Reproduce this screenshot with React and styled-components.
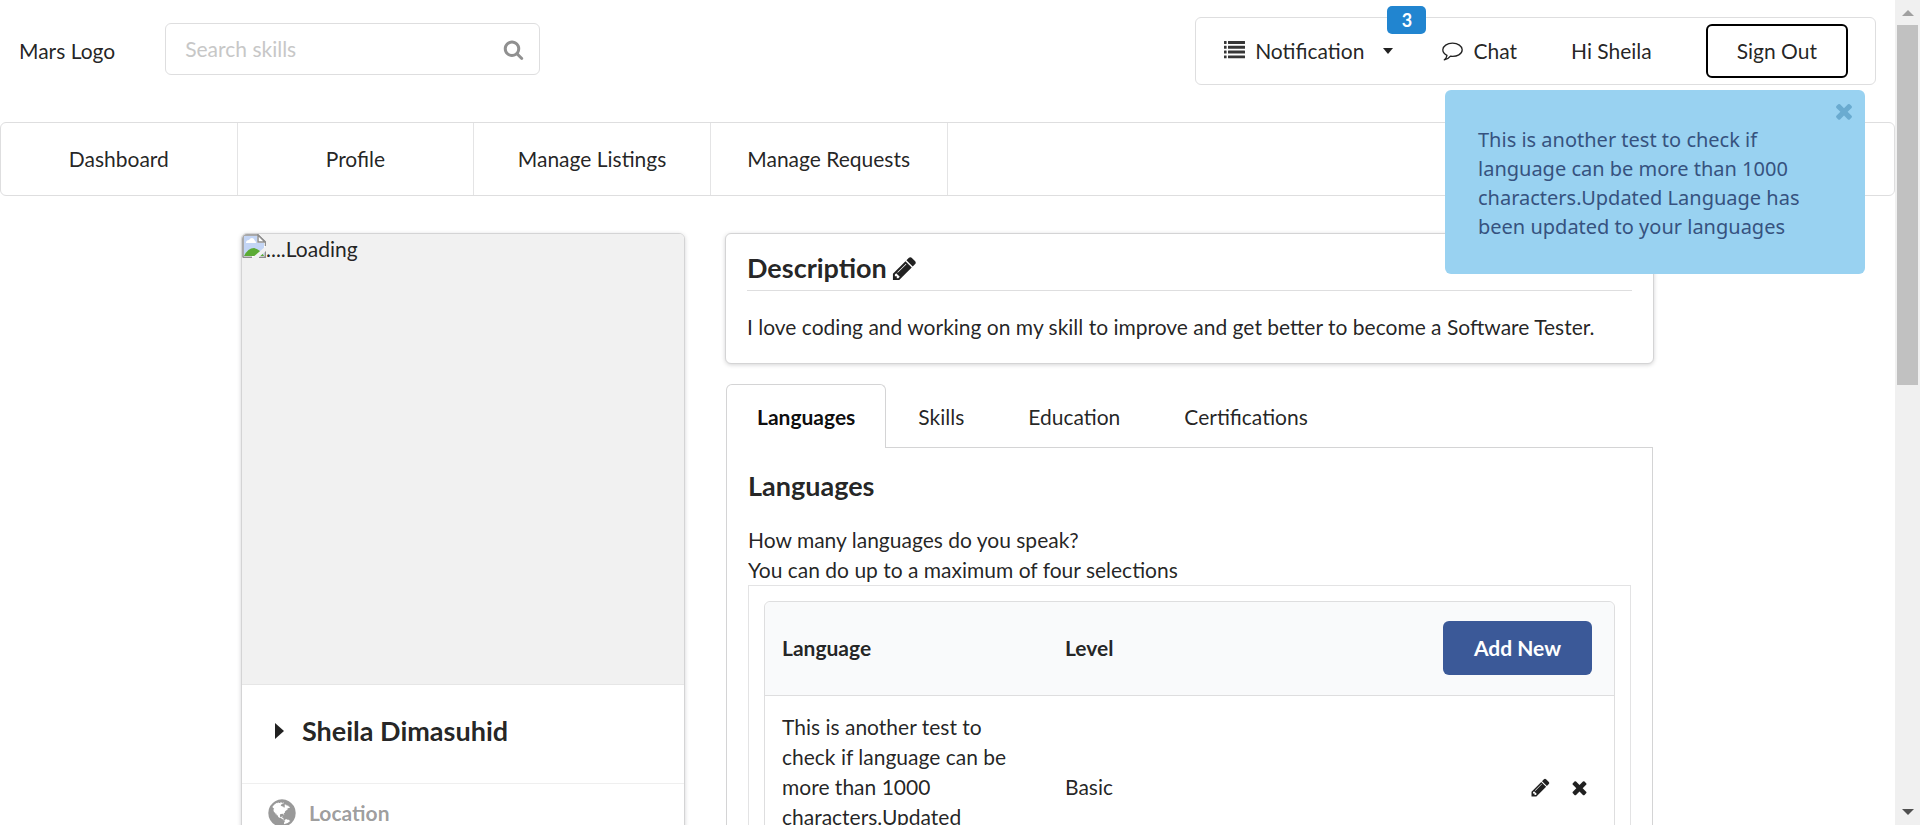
import React from 'react';
import styled, { createGlobalStyle } from 'styled-components';

const ink = 'rgba(0, 0, 0, 0.87)';
const line = '#dededf';
const strongLine = '#d4d4d5';

const GlobalStyle = createGlobalStyle`
  *, *::before, *::after { box-sizing: border-box; }
  body {
    margin: 0;
    background: #fff;
    color: ${ink};
    font: 21px/30px Lato, "Liberation Sans", sans-serif;
  }
  h2, h3, p { margin: 0; }
  button, input { font: inherit; color: inherit; }
  button { cursor: pointer; }
  a { color: inherit; text-decoration: none; }
`;

/* ---------- icons ---------- */

const Svg = styled.svg`
  display: block;
  flex: none;
  fill: currentColor;
`;

const paths = {
  search:
    'M1216 832q0-185-131.5-316.5t-316.5-131.5-316.5 131.5-131.5 316.5 131.5 316.5 316.5 131.5 316.5-131.5 131.5-316.5zm512 832q0 52-38 90t-90 38q-54 0-90-38l-343-342q-179 124-399 124-143 0-273.5-55.5t-225-150-150-225-55.5-273.5 55.5-273.5 150-225 225-150 273.5-55.5 273.5 55.5 225 150 150 225 55.5 273.5q0 220-124 399l343 343q37 37 37 90z',
  pencil:
    'M491 1536l91-91-235-235-91 91v107h128v128h107zm523-928q0-22-22-22-10 0-17 7l-542 542q-7 7-7 17 0 22 22 22 10 0 17-7l542-542q7-7 7-17zm-54-192l416 416-832 832h-416v-416zm683 96q0 53-37 90l-166 166-416-416 166-165q36-38 90-38 53 0 91 38l235 234q37 39 37 91z',
  close:
    'M1490 1322q0 40-28 68l-136 136q-28 28-68 28t-68-28l-294-294-294 294q-28 28-68 28t-68-28l-136-136q-28-28-28-68t28-68l294-294-294-294q-28-28-28-68t28-68l136-136q28-28 68-28t68 28l294 294 294-294q28-28 68-28t68 28l136 136q28 28 28 68t-28 68l-294 294 294 294q28 28 28 68z',
  globe:
    'M896 128q209 0 385.5 103t279.5 279.5 103 385.5-103 385.5-279.5 279.5-385.5 103-385.5-103-279.5-279.5-103-385.5 103-385.5 279.5-279.5 385.5-103zm274 521q-2 1-9.5 9.5t-13.5 9.5q2 0 4.5-5t5-11 3.5-7q6-7 22-15 14-6 52-12 34-8 51 11-2-2 9.5-13t14.5-12q3-2 15-4.5t15-7.5l2-22q-12 1-17.5-7t-6.5-21q0 2-6 8 0-7-4.5-8t-11.5 1-9 1q-10-3-15-7.5t-8-16.5-4-15q-2-5-9.5-11t-9.5-10q-1-2-2.5-5.5t-3-6.5-4-5.5-5.5-2.5-7 5-7.5 10-4.5 5q-3-2-6-1.5t-4.5 1-4.5 3-5 3.5q-3 2-8.5 3t-8.5 2q15-5-1-11-10-4-16-3 9-4 7.5-12t-8.5-14h5q-1-4-8.5-8.5t-17.5-8.5-13-6q-8-5-34-9.5t-33-.5q-5 6-4.5 10.5t4 14 3.5 12.5q1 6-5.5 13t-6.5 12q0 7 14 15.5t10 21.5q-3 8-16 16t-16 12q-5 8-1.5 18.5t10.5 16.5q2 2 1.5 4t-3.5 4.5-5.5 4-6.5 3.5l-3 2q-11 5-20.5-6t-13.5-26q-7-25-16-30-23-8-29 1-5-13-41-26-25-9-58-4 6-1 0-15-7-15-19-12 3-6 4-17.5t1-13.5q3-13 12-23 1-1 7-8.5t9.5-13.5.5-6q35 4 50-11 5-5 11.5-17t10.5-17q9-6 14-5.5t14.5 5.5 14.5 5q14 1 15.5-11t-7.5-20q12 1 3-17-4-7-8-9-12-4-27 5-8 4 2 8-1-1-9.5 10.5t-16.5 17.5-16-5q-1-1-5.5-13.5t-9.5-13.5q-8 0-16 15 3-8-11-15t-24-8q19-12-8-27-7-4-20.5-5t-19.5 4q-5 7-5.5 11.5t5 8 10.5 5.5 11.5 4 8.5 3q14 10 8 14-2 1-8.5 3.5t-11.5 4.5-6 4q-3 4 0 14t-2 14q-5-5-9-17.5t-7-16.5q7 9-25 6l-10-1q-4 0-16 2t-20.5 1-13.5-8q-4-8 0-20 1-4 4-2-4-3-11-9.5t-10-8.5q-46 15-94 41 6 1 12-1 5-2 13-6.5t10-5.5q34-14 42-7l5-5q14 16 20 25-7-4-30-1-20 6-22 12 7 12 5 18-4-3-11.5-10t-14.5-11-15-5q-16 0-22 1-146 80-235 222 7 7 12 8 4 1 5 9t2.5 11 11.5-3q9 8 3 19 1-1 44 27 19 17 21 21 3 11-10 18-1-2-9-9t-9-4q-3 5 .5 18.5t10.5 12.5q-7 0-9.5 16t-2.5 35.5-1 23.5l2 1q-3 12 5.5 34.5t21.5 19.5q-13 3 20 43 6 8 8 9 3 2 12 7.5t15 10 10 10.5q4 5 10 22.5t14 23.5q-2 6 9.5 20t10.5 23q-1 0-2.5 1t-2.5 1q3 7 15.5 14t15.5 13q1 3 2 10t3 11 8 2q2-20-24-62-15-25-17-29-3-5-5.5-15.5t-4.5-14.5q2 0 6 1.5t8.5 3.5 7.5 4 2 3q-3 7 2 17.5t12 18.5 17 19 12 13q6 6 14 19.5t0 13.5q9 0 20 10.5t17 19.5q5 8 8 26t5 24q2 7 8.5 13.5t12.5 9.5l16 8 13 7q5 2 18.5 10.5t21.5 11.5q10 4 16 4t14.5-2.5 13.5-3.5q15-2 29 15t21 21q36 19 55 11-2 1 .5 7.5t8 15.5 9 14.5 5.5 8.5q5 6 18 15t18 15q6-4 7-9-3 8 7 20t18 10q14-3 14-32-31 15-49-18 0-1-2.5-5.5t-4-8.5-2.5-8.5 0-7.5 5-3q9 0 10-3.5t-2-12.5-4-13q-1-8-11-20t-12-15q-5 9-16 8t-16-9q0 1-1.5 5.5t-1.5 6.5q-13 0-15-1 1-3 2.5-17.5t3.5-22.5q1-4 5.5-12t7.5-14.5 4-12.5-4.5-9.5-17.5-2.5q-19 1-26 20-1 3-3 10.5t-5 11.5-9 7q-7 3-24 2t-24-5q-13-8-22.5-29t-9.5-37q0-10 2.5-26.5t3-25-5.5-24.5q3-2 9-9.5t10-10.5q2-1 4.5-1.5t4.5 0 4-1.5 3-6q-1-1-4-3-3-3-4-3 7 3 28.5-1.5t27.5 1.5q15 11 22-2 0-1-2.5-9.5t-.5-13.5q5 27 29 9 3 3 15.5 5t17.5 5q3 2 7 5.5t5.5 4.5 5-.5 8.5-6.5q10 14 12 24 11 40 19 44 7 3 11 2t4.5-9.5 0-14-1.5-12.5l-1-8v-18l-1-8q-15-3-18.5-12t1.5-18.5 15-18.5q1-1 8-3.5t15.5-6.5 12.5-8q21-19 15-35 7 0 11-9-1 0-5-3t-7.5-5-4.5-2q9-5 2-16 5-3 7.5-11t7.5-10q9 12 21 2 7-8 1-16 5-7 20.5-10.5t18.5-9.5q7 2 8-2t1-12 3-12q4-5 15-9t13-5l17-11q3-4 0-4 18 2 31-11 10-11-6-20 3-6-3-9.5t-15-5.5q3-1 11.5-.5t10.5-1.5q15-10-7-16-17-5-43 12zm-163 877q206-36 351-189-3-3-12.5-4.5t-12.5-3.5q-18-7-24-8 1-7-2.5-13t-8-9-12.5-8-11-7q-2-2-7-6t-7-5.5-7.5-4.5-8.5-2-10 1l-3 1q-3 1-5.5 2.5t-5.5 3-4 3 0 2.5q-21-17-36-22-5-1-11-5.5t-10.5-7-10-1.5-11.5 7q-5 5-6 15t-2 13q-7-5 0-17.5t2-18.5q-3-6-10.5-4.5t-12 4.5-11.5 8.5-9 6.5-8.5 5.5-8.5 7.5q-3 4-6 12t-5 11q-2-4-11.5-6.5t-9.5-5.5q2 10 4 35t5 38q7 31-12 48-27 25-29 40-4 22 12 26 0 7-8 20.5t-7 21.5q0 6 2 16z',
};

const Icon = ({ name, size = 21 }) => (
  <Svg viewBox="0 0 1792 1792" width={size} height={size} aria-hidden="true">
    <path d={paths[name]} />
  </Svg>
);

const ListIcon = () => (
  <Svg viewBox="0 0 21 20" width="21" height="20" opacity="0.9" aria-hidden="true">
    {[0, 4.8, 9.6, 14.4].map((y) => (
      <g key={y}>
        <rect x="0" y={y} width="2.6" height="2.9" rx="0.3" />
        <rect x="4" y={y} width="17" height="2.9" rx="0.3" />
      </g>
    ))}
  </Svg>
);

const ChatIcon = () => (
  <Svg viewBox="0 0 21 19" width="21" height="19" aria-hidden="true">
    <path
      d="M10.500 1.200C5.200 1.200 .8 4.100 .8 7.800C.8 10.200 2.500 12.200 5 13.300C4.700 15 3.800 16.600 2.300 17.800C5 17.400 7 16.200 8.500 14.200C15.200 15 20.200 12 20.200 7.800C20.200 4.100 15.900 1.200 10.500 1.200Z"
      fill="none"
      stroke="currentColor"
      strokeWidth="1.300"
      strokeLinejoin="round"
    />
  </Svg>
);

const Triangle = ({ points, width, height }) => (
  <Svg viewBox={`0 0 ${width} ${height}`} width={width} height={height} aria-hidden="true">
    <polygon points={points} />
  </Svg>
);

const BrokenImage = () => (
  <Svg viewBox="0 0 24 24" width="24" height="24" aria-hidden="true">
    <path d="M1 1H16L23 8V23H1Z" fill="#fff" />
    <path d="M2 2H15V9H22V22H2Z" fill="#c3d5f5" />
    <path d="M4 9q0-3 3-3q1-2 3-2q2 0 3 3q1 0 1 2z" fill="#fff" />
    <path d="M2 22q4-8 10-8q7 2 10 8z" fill="#5bab35" />
    <path d="M1 23.500V1H16L23.500 8V12" fill="none" stroke="#8e8e8e" strokeWidth="1.500" />
    <path d="M16 1V8H23Z" fill="#fff" stroke="#8e8e8e" strokeWidth="1.500" />
    <path d="M1 23.250H10M17 23.250H23.250V17" fill="none" stroke="#8e8e8e" strokeWidth="1.500" />
    <path d="M10 24L24 12V17L16 24Z" fill="#f1f1f1" />
  </Svg>
);

/* ---------- window frame ---------- */

const Window = styled.div`
  display: grid;
  grid-template-columns: minmax(0, 1fr) 25px;
  height: 100vh;
`;

const Viewport = styled.div`
  overflow-y: auto;
  scrollbar-width: none;
`;

const ScrollTrack = styled.div`
  display: flex;
  flex-direction: column;
  align-items: center;
  padding: 10px 2px;
  background: #f0f0f0;
`;

const ArrowUp = styled.div`
  color: #a0a0a0;
  height: 15px;
`;

const Thumb = styled.div`
  width: 100%;
  height: calc(45% - 2px);
  background: #c1c1c1;
`;

const ArrowDown = styled.div`
  margin-top: auto;
  color: #505050;
`;

/* ---------- header ---------- */

const Header = styled.header`
  display: flex;
  align-items: center;
  padding: 17px 19px 0;
`;

const SearchBox = styled.label`
  display: flex;
  align-items: center;
  width: 375px;
  height: 52px;
  margin: 0 auto 4px 50px;
  padding: 0 15px 0 19px;
  border: 1px solid ${line};
  border-radius: 6px;
  color: #909090;

  input {
    flex: 1;
    min-width: 0;
    padding: 0;
    border: 0;
    outline: 0;
    background: none;
    color: ${ink};
  }
  input::placeholder { color: #c7c7c7; opacity: 1; }
`;

const UserMenu = styled.div`
  display: flex;
  align-items: center;
  height: 68px;
  padding: 0 27px 0 4px;
  border: 1px solid ${line};
  border-radius: 6px;
`;

const MenuItem = styled.a`
  position: relative;
  display: flex;
  align-items: center;
  gap: 10px;
  padding: 0 ${(p) => p.$pad || 24}px;
`;

const NotificationCaret = styled.span`
  margin: 0 0 0 8px;
`;

const Badge = styled.span`
  position: absolute;
  top: -30px;
  right: -8px;
  width: 39px;
  height: 28px;
  border-radius: 5px;
  background: #2185d0;
  color: #fff;
  font-size: 18px;
  font-weight: 700;
  line-height: 28px;
  text-align: center;
`;

const SignOut = styled.button`
  height: 54px;
  margin-left: 24px;
  padding: 0 29px;
  border: 2px solid #000;
  border-radius: 6px;
  background: #fff;
`;

const Nav = styled.nav`
  display: flex;
  height: 74px;
  margin-top: 37px;
  border: 1px solid ${line};
  border-radius: 6px;
`;

const NavLink = styled.a`
  display: flex;
  align-items: center;
  justify-content: center;
  width: 12.5%;
  border-right: 1px solid #e4e4e5;
`;

/* ---------- content ---------- */

const Main = styled.main`
  display: grid;
  grid-template-columns: 444px minmax(0, 1fr);
  align-items: start;
  gap: 40px;
  max-width: 1413px;
  margin: 37px auto 42px;
`;

const Card = styled.section`
  border: 1px solid ${strongLine};
  border-radius: 6px;
  box-shadow: 0 1px 4px ${strongLine};
  background: #fff;
  overflow: hidden;
`;

const Photo = styled.div`
  display: flex;
  height: 450px;
  background: #f1f1f1;
`;

const Owner = styled.button`
  display: flex;
  align-items: center;
  gap: 18px;
  width: 100%;
  padding: 29px 33px 35px;
  border: 0;
  border-top: 1px solid #e6e6e6;
  background: none;
  font-size: 27px;
  font-weight: 700;
  line-height: 34px;
`;

const Fact = styled.div`
  display: flex;
  align-items: center;
  gap: 11px;
  padding: 13px 24px;
  border-top: 1px solid #efefef;
  color: rgba(0, 0, 0, 0.4);
  font-weight: 700;
`;

const Heading = styled.h2`
  display: flex;
  align-items: center;
  gap: 4px;
  font-size: 27px;
  line-height: 34px;
`;

const Description = styled(Card)`
  margin-bottom: 20px;
  padding: 17px 21px 21px;

  ${Heading} {
    margin-bottom: 21px;
    padding-bottom: 5px;
    border-bottom: 1px solid ${line};
  }
`;

const IconButton = styled.button`
  display: flex;
  justify-content: center;
  min-width: 25px;
  padding: 0;
  border: 0;
  background: none;
`;

const TabList = styled.div`
  display: flex;
  margin: 0 1px;
`;

const Tab = styled.button`
  height: 64px;
  margin-bottom: -1px;
  padding: 0 31px;
  border: 1px solid transparent;
  border-bottom: 0;
  border-radius: 6px 6px 0 0;
  background: none;

  &[aria-selected='true'] {
    padding: 0 30px;
    border-color: ${strongLine};
    background: #fff;
    color: rgba(0, 0, 0, 0.95);
    font-weight: 700;
  }
`;

const Panel = styled.div`
  margin: 0 1px;
  padding: 21px;
  border: 1px solid ${strongLine};

  > ${Heading} { margin-bottom: 22px; }
`;

const TableFrame = styled.div`
  padding: 15px;
  border: 1px solid #e3e3e4;
`;

const Table = styled.table`
  width: 100%;
  table-layout: fixed;
  border: 1px solid ${line};
  border-radius: 6px;
  border-spacing: 0;
  text-align: left;

  th { padding: 19px 17px 20px; background: #f9fafb; border-bottom: 1px solid ${line}; }
  th:first-child { border-top-left-radius: 6px; }
  th:last-child { border-top-right-radius: 6px; }
  td { padding: 16px 17px; }
  th:last-child, td:last-child { padding-right: 22px; text-align: right; }
`;

const AddButton = styled.button`
  height: 54px;
  padding: 0 31px;
  border: 0;
  border-radius: 6px;
  background: #3b5998;
  color: #fff;
  font-weight: 700;
`;

const RowActions = styled.div`
  display: flex;
  justify-content: flex-end;
  gap: 14px;
`;

const Toast = styled.div`
  position: fixed;
  z-index: 2;
  top: 90px;
  right: 55px;
  width: 420px;
  padding: 35px 60px 33px 33px;
  border-radius: 6px;
  background: #99d2f1;
  color: #36527f;
  font: 20px/29px "Noto Sans", sans-serif;
`;

const ToastClose = styled.button`
  position: absolute;
  top: 9px;
  right: 9px;
  padding: 0;
  border: 0;
  background: none;
  color: #6aabd0;
`;

const languages = [
  {
    name: 'This is another test to check if language can be more than 1000 characters.Updated Language',
    level: 'Basic',
  },
];

export default function App() {
  return (
    <Window>
      <GlobalStyle />
      <Viewport>
        <Header>
          <span>Mars Logo</span>
          <SearchBox>
            <input type="text" placeholder="Search skills" aria-label="Search skills" />
            <Icon name="search" />
          </SearchBox>
          <UserMenu>
            <MenuItem href="#notifications">
              <ListIcon />
              Notification
              <NotificationCaret>
                <Triangle points="1,0 11,0 6,6" width={12} height={6} />
              </NotificationCaret>
              <Badge>3</Badge>
            </MenuItem>
            <MenuItem href="#chat">
              <ChatIcon />
              Chat
            </MenuItem>
            <MenuItem href="#account" $pad={30}>Hi Sheila</MenuItem>
            <SignOut type="button">Sign Out</SignOut>
          </UserMenu>
        </Header>

        <Nav>
          {['Dashboard', 'Profile', 'Manage Listings', 'Manage Requests'].map((item) => (
            <NavLink href="#" key={item}>{item}</NavLink>
          ))}
        </Nav>

        <Main>
          <Card>
            <Photo>
              <BrokenImage />
              ....Loading
            </Photo>
            <Owner type="button">
              <Triangle points="0,0 9,8 0,16" width={9} height={16} />
              Sheila Dimasuhid
            </Owner>
            <Fact>
              <Icon name="globe" size={32} />
              Location
            </Fact>
          </Card>

          <div>
            <Description>
              <Heading>
                Description
                <IconButton type="button" aria-label="Edit description">
                  <Icon name="pencil" size={27} />
                </IconButton>
              </Heading>
              <p>I love coding and working on my skill to improve and get better to become a Software Tester.</p>
            </Description>

            <TabList role="tablist">
              {['Languages', 'Skills', 'Education', 'Certifications'].map((tab, i) => (
                <Tab type="button" role="tab" aria-selected={i === 0} key={tab}>{tab}</Tab>
              ))}
            </TabList>
            <Panel role="tabpanel">
              <Heading>Languages</Heading>
              <p>How many languages do you speak?</p>
              <p>You can do up to a maximum of four selections</p>
              <TableFrame>
                <Table>
                  <thead>
                    <tr>
                      <th>Language</th>
                      <th>Level</th>
                      <th><AddButton type="button">Add New</AddButton></th>
                    </tr>
                  </thead>
                  <tbody>
                    {languages.map((row) => (
                      <tr key={row.name}>
                        <td>{row.name}</td>
                        <td>{row.level}</td>
                        <td>
                          <RowActions>
                            <IconButton type="button" aria-label="Edit"><Icon name="pencil" /></IconButton>
                            <IconButton type="button" aria-label="Delete"><Icon name="close" /></IconButton>
                          </RowActions>
                        </td>
                      </tr>
                    ))}
                  </tbody>
                </Table>
              </TableFrame>
            </Panel>
          </div>
        </Main>
      </Viewport>

      <ScrollTrack aria-hidden="true">
        <ArrowUp><Triangle points="0,6 6,0 12,6" width={12} height={6} /></ArrowUp>
        <Thumb />
        <ArrowDown><Triangle points="0,0 12,0 6,6" width={12} height={6} /></ArrowDown>
      </ScrollTrack>

      <Toast role="status">
        This is another test to check if language can be more than 1000 characters.Updated
        Language has been updated to your languages
        <ToastClose type="button" aria-label="Close message">
          <Icon name="close" size={24} />
        </ToastClose>
      </Toast>
    </Window>
  );
}
